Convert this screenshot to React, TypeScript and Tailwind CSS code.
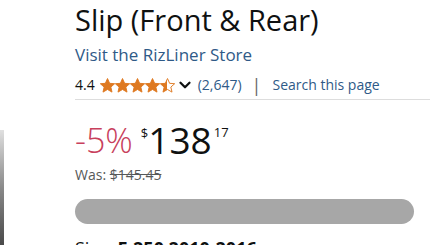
import { ChevronDown } from "lucide-react";

function Star({ fill }: { fill: "full" | "half" }) {
  return (
    <svg viewBox="1 1 22 22" className="h-[15px] w-[15px]">
      <defs>
        <linearGradient id="half">
          <stop offset="50%" stopColor="#de7921" />
          <stop offset="50%" stopColor="#ffffff" />
        </linearGradient>
      </defs>
      <path
        d="M12 1.8l3.1 7 7.4.6-5.6 4.9 1.7 7.4L12 17.8l-6.6 3.9 1.7-7.4L1.5 9.4l7.4-.6z"
        fill={fill === "full" ? "#de7921" : "url(#half)"}
        stroke="#de7921"
        strokeWidth="1.4"
        strokeLinejoin="round"
      />
    </svg>
  );
}

export default function App() {
  return (
    <div className="flex h-[245px] w-[430px] overflow-hidden bg-white font-['Open_Sans',sans-serif] text-[#0f1111]">
      {/* image edge */}
      <div className="mt-[130px] h-[115px] w-[4px] shrink-0 bg-gradient-to-b from-[#e0e0e0] via-[#8a8a8a] to-[#4a4a4a]" />

      <div className="ml-[71px] flex flex-1 flex-col [&>*]:shrink-0">
        <h1 className="whitespace-nowrap text-[29px] leading-[40px]">Slip (Front &amp; Rear)</h1>
        <a className="mt-[3px] text-[17px] leading-[24px] text-[#2f5a87]">Visit the RizLiner Store</a>

        <div className="mt-[8px] flex h-[20px] items-center text-[14px] leading-[20px]">
          <span>4.4</span>
          <div className="ml-[5px] flex">
            <Star fill="full" />
            <Star fill="full" />
            <Star fill="full" />
            <Star fill="full" />
            <Star fill="half" />
          </div>
          <ChevronDown className="ml-[1px] h-[18px] w-[18px]" strokeWidth={3} />
          <span className="ml-[4px] text-[#2f5a87]">(2,647)</span>
          <span className="ml-[10px] text-[18px] text-[#666]">|</span>
          <span className="ml-[11px] text-[#2f5a87]">Search this page</span>
        </div>

        <div className="mt-[4px] h-px bg-[#dddddd]" />

        <div className="mt-[18px] flex items-start">
          <span className="text-[34px] font-light leading-[44px] text-[#c8405c]">-5%</span>
          <span className="ml-[8px] mt-[8px] text-[13px] leading-[14px]">$</span>
          <span className="text-[37px] leading-[44px]">138</span>
          <span className="ml-[2px] mt-[7px] text-[13px] leading-[14px]">17</span>
        </div>

        <div className="mt-[3px] text-[14px] leading-[20px] text-[#565959]">
          Was: <span className="line-through">$145.45</span>
        </div>

        <div className="mr-[16px] mt-[14px] h-[25px] rounded-full bg-[#a7a7a7]" />

        <div className="mt-[12px] whitespace-nowrap text-[18px] leading-[24px]">
          Size: <span className="font-bold">F-250 2010-2016</span>
        </div>
      </div>
    </div>
  );
}
